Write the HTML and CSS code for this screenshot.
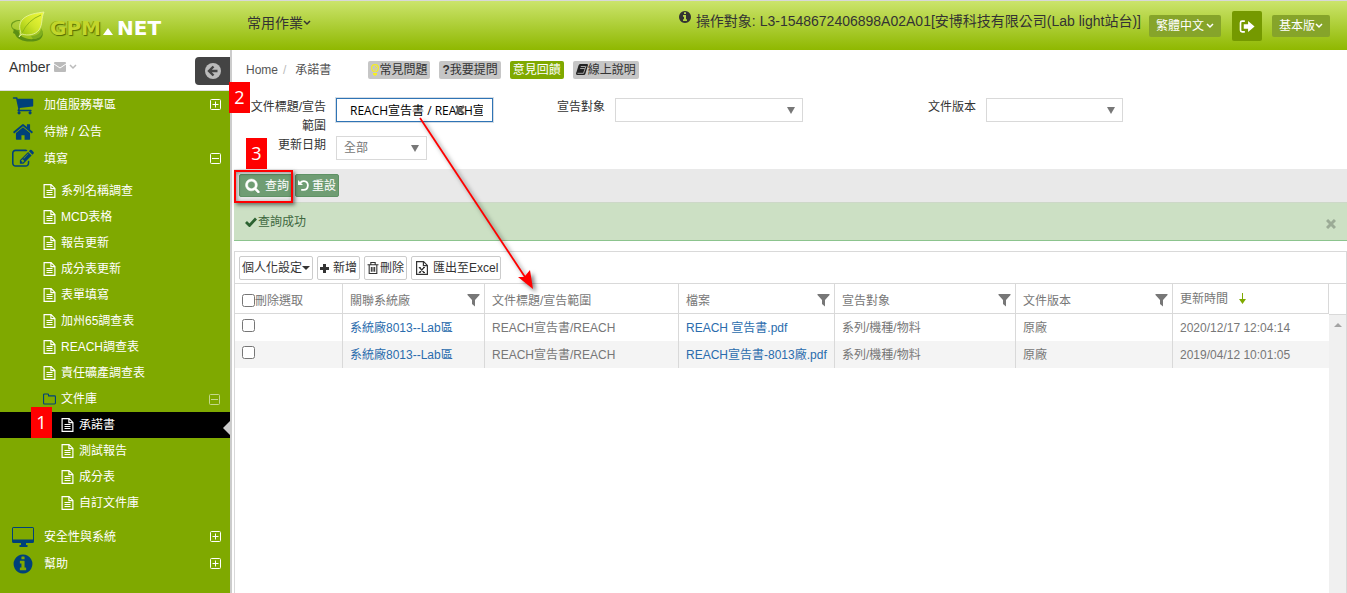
FILE: index.html
```html
<!DOCTYPE html>
<html lang="zh-Hant">
<head>
<meta charset="utf-8">
<title>GPM.NET 承諾書</title>
<link rel="stylesheet" href="styles.css">
</head>
<body>
<svg class="defs" aria-hidden="true">
  <symbol id="cart" viewBox="0 0 1792 1792"><path d="M704 1536q0 52-38 90t-90 38-90-38-38-90 38-90 90-38 90 38 38 90zm896 0q0 52-38 90t-90 38-90-38-38-90 38-90 90-38 90 38 38 90zm128-1088v512q0 24-16.500 42.500t-40.500 21.500l-1044 122q13 60 13 70 0 16-24 64h920q26 0 45 19t19 45-19 45-45 19h-1024q-26 0-45-19t-19-45q0-11 8-31.500t16-36 21.500-40 15.500-29.500l-177-823h-204q-26 0-45-19t-19-45 19-45 45-19h256q16 0 28.500 6.500t19.500 15.500 13 24.500 8 26 5.500 29.500 4.500 26h1201q26 0 45 19t19 45z"/></symbol>
  <symbol id="home" viewBox="0 0 1792 1792"><path d="M1472 992v480q0 26-19 45t-45 19h-384v-384h-256v384h-384q-26 0-45-19t-19-45v-480q0-1 .5-3t.5-3l575-474 575 474q1 2 1 6zm223-69l-62 74q-8 9-21 11h-3q-13 0-21-7l-692-577-692 577q-12 8-24 7-13-2-21-11l-62-74q-8-10-7-23.500t11-21.500l719-599q32-26 76-26t76 26l244 204v-195q0-14 9-23t23-9h192q14 0 23 9t9 23v408l219 182q10 8 11 21.500t-7 23.500z"/></symbol>
  <symbol id="edit" viewBox="0 0 1792 1792"><path d="M888 1184l116-116-152-152-116 116v56h96v96h56zm440-720q-16-16-33 1l-350 350q-17 17-1 33t33-1l350-350q17-17 1-33zm80 594v190q0 119-84.500 203.500t-203.500 84.500h-832q-119 0-203.500-84.500t-84.500-203.500v-832q0-119 84.500-203.500t203.500-84.500h832q63 0 117 25 15 7 18 23 3 17-9 29l-49 49q-14 14-32 8-23-6-45-6h-832q-66 0-113 47t-47 113v832q0 66 47 113t113 47h832q66 0 113-47t47-113v-126q0-13 9-22l64-64q15-15 35-7t20 29zm-96-738l288 288-672 672h-288v-288zm444 132l-92 92-288-288 92-92q28-28 68-28t68 28l152 152q28 28 28 68t-28 68z"/></symbol>
  <symbol id="info" viewBox="0 0 1792 1792"><path d="M1152 1376v-160q0-14-9-23t-23-9h-96v-512q0-14-9-23t-23-9h-320q-14 0-23 9t-9 23v160q0 14 9 23t23 9h96v320h-96q-14 0-23 9t-9 23v160q0 14 9 23t23 9h448q14 0 23-9t9-23zm-128-896v-160q0-14-9-23t-23-9h-192q-14 0-23 9t-9 23v160q0 14 9 23t23 9h192q14 0 23-9t9-23zm640 416q0 209-103 385.500t-279.500 279.500-385.500 103-385.500-103-279.500-279.500-103-385.500 103-385.500 279.500-279.500 385.500-103 385.500 103 279.500 279.500 103 385.500z"/></symbol>
  <symbol id="search" viewBox="0 0 1792 1792"><path stroke="currentColor" stroke-width="60" d="M1216 832q0-185-131.500-316.500t-316.500-131.500-316.500 131.500-131.500 316.500 131.500 316.500 316.500 131.500 316.500-131.500 131.500-316.500zm512 832q0 52-38 90t-90 38q-54 0-90-38l-343-342q-179 124-399 124-143 0-273.500-55.500t-225-150-150-225-55.500-273.500 55.500-273.500 150-225 225-150 273.500-55.500 273.500 55.500 225 150 150 225 55.500 273.500q0 220-124 399l343 343q37 37 37 90z"/></symbol>
  <symbol id="monitor" viewBox="0 0 22 20"><path fill-rule="evenodd" d="M1.500 0h19A1.500 1.500 0 0 1 22 1.500v13a1.500 1.500 0 0 1-1.500 1.500H14v2h1.500v2h-8v-2H9v-2H1.500A1.500 1.500 0 0 1 0 14.500v-13A1.500 1.500 0 0 1 1.500 0zM1 1v11.500h20V1z"/></symbol>
  <symbol id="file" viewBox="0 0 12 14"><path fill="none" stroke="currentColor" stroke-width="1.200" d="M.6.600h7L11.400 4.400v9H.6zM7.400.600v4h4M3 6.500h6M3 8.500h6M3 10.500h6"/></symbol>
  <symbol id="folder" viewBox="0 0 14 12"><path fill="none" stroke="currentColor" stroke-width="1.200" d="M.6 1.600q0-1 1-1H5q1 0 1 1v1h6.400q1 0 1 1v6.800q0 1-1 1H1.600q-1 0-1-1z"/></symbol>
  <symbol id="plus-box" viewBox="0 0 11 11"><path fill="none" stroke="currentColor" d="M1.500.500h8q1 0 1 1v8q0 1-1 1h-8q-1 0-1-1v-8q0-1 1-1zM2.500 5.500h6M5.500 2.500v6"/></symbol>
  <symbol id="minus-box" viewBox="0 0 11 11"><path fill="none" stroke="currentColor" d="M1.500.500h8q1 0 1 1v8q0 1-1 1h-8q-1 0-1-1v-8q0-1 1-1zM2 5.500h7"/></symbol>
  <symbol id="chevron" viewBox="0 0 8 6"><path fill="none" stroke="currentColor" stroke-width="1.500" d="M1 1l3 3 3-3"/></symbol>
  <symbol id="filter" viewBox="0 0 12 13"><path d="M0 0h12v1L7.500 6v6.500L4.500 10V6L0 1z"/></symbol>
  <symbol id="caret" viewBox="0 0 8 7"><path d="M0 0h8L4 7z"/></symbol>
</svg>

<header class="topbar">
  <a class="brand" href="#" aria-label="GPM.NET">
    <svg class="brand-leaf" viewBox="0 0 35 31">
      <defs><linearGradient id="leaf" x1="0" y1="1" x2="1" y2="0"><stop offset="0" stop-color="#8dbb08"/><stop offset=".5" stop-color="#cfe52a"/><stop offset="1" stop-color="#f2fb3c"/></linearGradient></defs>
      <path fill="#6f9e1c" d="M9 10C5 10 1 12 1 15c0 2 3 4 8 4l-1 2C2 20 0 17 0 14c0-3 4-5 9-5z"/>
      <path fill="#5c8f14" d="M3 18l5 3c0 4 7 8 15 7 5-1 8-4 8-8 2 4 0 9-6 10-10 2-19-1-21-7l-2-1z"/>
      <path fill="#7fae1e" d="M20 25c6 0 10-3 10-8l2 4c-1 5-5 7-10 7z"/>
      <path fill="url(#leaf)" stroke="#eaf6a4" stroke-width=".8" d="M33 1C26 2 17 3 12 8c-4 4-4 9-2 14l-2 4 3-3c6 2 13 1 17-4 4-6 2-12 5-18z"/>
      <path fill="none" stroke="#8fb51a" d="M30 4Q17 9 11 22"/>
    </svg>
    <span class="brand-gpm">GPM</span>
    <svg class="brand-tri" viewBox="0 0 10 7"><path fill="#fff" d="M5 0l5 7H0z"/></svg>
    <span class="brand-net">NET</span>
  </a>
  <button class="top-menu">常用作業<svg class="chev"><use href="#chevron"/></svg></button>
  <p class="target"><svg class="target-icon"><use href="#info"/></svg>操作對象: L3-1548672406898A02A01[安博科技有限公司(Lab light站台)]</p>
  <button class="top-btn">繁體中文<svg class="chev"><use href="#chevron"/></svg></button>
  <button class="logout" aria-label="登出"><svg viewBox="0 0 14 12"><path fill="none" stroke="#fff" stroke-width="1.500" d="M5 1H2.500Q1 1 1 2.500v7Q1 11 2.500 11H5"/><path fill="#fff" d="M4 4h4V1l6 5-6 5V8H4z"/></svg></button>
  <button class="top-btn">基本版<svg class="chev"><use href="#chevron"/></svg></button>
</header>

<div class="page">
  <aside class="side">
    <div class="user">
      <span>Amber</span>
      <svg class="mail" viewBox="0 0 12 10"><path fill="#bbb" d="M1 0h10q1 0 1 1v8q0 1-1 1H1q-1 0-1-1V1q0-1 1-1z"/><path fill="none" stroke="#fff" d="M0 2l6 4 6-4"/></svg>
      <svg class="chev pale"><use href="#chevron"/></svg>
      <button class="collapse" aria-label="收合選單"><svg viewBox="0 0 16 16"><circle cx="8" cy="8" r="8" fill="#bbb"/><path fill="none" stroke="#444" stroke-width="2.400" d="M8.500 3.500L4 8l4.500 4.500M4 8h8.500"/></svg></button>
    </div>
    <nav class="menu">
      <a class="item" href="#"><svg class="big"><use href="#cart"/></svg>加值服務專區<svg class="toggle"><use href="#plus-box"/></svg></a>
      <a class="item" href="#"><svg class="big"><use href="#home"/></svg>待辦 / 公告</a>
      <a class="item" href="#"><svg class="big"><use href="#edit"/></svg>填寫<svg class="toggle"><use href="#minus-box"/></svg></a>
      <div class="sub">
        <a class="leaf" href="#"><svg class="doc"><use href="#file"/></svg>系列名稱調查</a>
        <a class="leaf" href="#"><svg class="doc"><use href="#file"/></svg>MCD表格</a>
        <a class="leaf" href="#"><svg class="doc"><use href="#file"/></svg>報告更新</a>
        <a class="leaf" href="#"><svg class="doc"><use href="#file"/></svg>成分表更新</a>
        <a class="leaf" href="#"><svg class="doc"><use href="#file"/></svg>表單填寫</a>
        <a class="leaf" href="#"><svg class="doc"><use href="#file"/></svg>加州65調查表</a>
        <a class="leaf" href="#"><svg class="doc"><use href="#file"/></svg>REACH調查表</a>
        <a class="leaf" href="#"><svg class="doc"><use href="#file"/></svg>責任礦產調查表</a>
        <a class="leaf" href="#"><svg class="doc navy"><use href="#folder"/></svg>文件庫<svg class="toggle dim"><use href="#minus-box"/></svg></a>
        <a class="leaf deep active" href="#"><svg class="doc"><use href="#file"/></svg>承諾書<span class="mark mark-1">1</span></a>
        <a class="leaf deep" href="#"><svg class="doc"><use href="#file"/></svg>測試報告</a>
        <a class="leaf deep" href="#"><svg class="doc"><use href="#file"/></svg>成分表</a>
        <a class="leaf deep" href="#"><svg class="doc"><use href="#file"/></svg>自訂文件庫</a>
      </div>
      <a class="item" href="#"><svg class="big screen"><use href="#monitor"/></svg>安全性與系統<svg class="toggle"><use href="#plus-box"/></svg></a>
      <a class="item" href="#"><svg class="big"><use href="#info"/></svg>幫助<svg class="toggle"><use href="#plus-box"/></svg></a>
    </nav>
  </aside>

  <main class="main">
    <div class="crumbs">
      <a href="#">Home</a><span class="slash">/</span><span>承諾書</span>
      <div class="help">
        <button class="tag"><svg class="bulb" viewBox="0 0 8 12"><path fill="#f7ef1e" d="M4 0a4 4 0 0 1 4 4q0 2-2 4H2Q0 6 0 4a4 4 0 0 1 4-4zM2 9h4v1.500L4 12l-2-1.500z"/><path fill="#c6c6c6" d="M4 1.200a2.800 2.800 0 0 1 2.800 2.800q0 1.500-1.600 3.200H2.800Q1.200 5.500 1.200 4A2.800 2.800 0 0 1 4 1.200z"/><path fill="none" stroke="#f7ef1e" d="M4 2.500q1.500 0 1.500 1.500M4 4.500V7"/></svg>常見問題</button>
        <button class="tag"><b>?</b>我要提問</button>
        <button class="tag green">意見回饋</button>
        <button class="tag"><svg class="book" viewBox="0 0 12 11"><path fill="#222" d="M4 0h7q1 0 1 1L9.500 9.500q-.3 1.500-2 1.500H1.500Q0 11 0 9.500q0-.8.500-1.500L2.500 1.500Q3 0 4 0z"/><path fill="none" stroke="#c6c6c6" stroke-width=".8" d="M4.800 2.500h4.500M4.200 4.500h4.500M1.500 9.300h6L10 2"/></svg>線上說明</button>
      </div>
    </div>

    <form class="filters">
      <label for="title">文件標題/宣告範圍</label>
      <div class="control"><div class="text-wrap"><input class="text" id="title" type="text" value="REACH宣告書 / REACH宣告書"><svg class="clear" viewBox="0 0 10 10"><path stroke="#666" stroke-width="2.500" d="M1 1l8 8M9 1L1 9"/></svg></div></div>
      <label for="target">宣告對象</label>
      <div class="control"><div class="select-wrap wide"><select id="target"><option></option></select><svg><use href="#caret"/></svg></div></div>
      <label for="version">文件版本</label>
      <div class="control"><div class="select-wrap medium"><select id="version"><option></option></select><svg><use href="#caret"/></svg></div></div>
      <label for="date">更新日期</label>
      <div class="control"><div class="select-wrap small"><select id="date"><option>全部</option></select><svg><use href="#caret"/></svg></div></div>
    </form>

    <div class="actions">
      <button class="act"><svg class="search"><use href="#search"/></svg>查詢</button>
      <button class="act reset"><svg class="undo" viewBox="0 0 12 12"><path fill="none" stroke="#fff" stroke-width="2" d="M2 3.500Q4 1 6.500 1.200 10.800 1.600 10.800 6 10.500 10.800 6 10.800H3.500"/><path fill="#fff" d="M0 0l5.500 5.500H0z"/></svg>重設</button>
    </div>

    <div class="alert" role="status">
      <svg class="check" viewBox="0 0 12 10"><path fill="none" stroke="#2c6231" stroke-width="2.800" d="M1 5l3.500 3.500L11 1.500"/></svg>
      <span>查詢成功</span>
      <button class="close" aria-label="關閉"><svg viewBox="0 0 10 10"><path stroke="#9bab96" stroke-width="3" d="M1 1l8 8M9 1L1 9"/></svg></button>
    </div>

    <section class="grid">
      <div class="tools">
        <button class="tool">個人化設定<svg class="drop" viewBox="0 0 8 4"><path d="M0 0h8L4 4z"/></svg></button>
        <button class="tool"><svg class="plus" viewBox="0 0 9 9"><path d="M3 0h3v3h3v3H6v3H3V6H0V3h3z"/></svg>新增</button>
        <button class="tool"><svg class="trash" viewBox="0 0 10 11"><path fill="none" stroke="#333" d="M0 2.500h10M3 2V.500h4V2M1.500 3v7.500h7V3M3.500 4.500V9M5 4.500V9M6.500 4.500V9"/></svg>刪除</button>
        <button class="tool"><svg class="xls" viewBox="0 0 12 14"><path fill="none" stroke="#333" stroke-width="1.200" d="M.6.600h7L11.400 4.400v9H.6zM7.400.600v4h4"/><path fill="none" stroke="#333" stroke-width="1.200" d="M3.500 6.500l4.500 5M8 6.500l-4.500 5M2.800 6.500h2M7 6.500h2M2.800 11.500h2M7 11.500h2"/></svg>匯出至Excel</button>
      </div>
      <div class="table-area">
        <table>
          <colgroup><col class="c-pick"><col class="c-plant"><col class="c-title"><col class="c-file"><col class="c-target"><col class="c-version"><col class="c-time"></colgroup>
          <thead>
            <tr>
              <th><label class="pick-all"><input type="checkbox">刪除選取</label></th>
              <th><div class="th">關聯系統廠<svg class="filter"><use href="#filter"/></svg></div></th>
              <th><div class="th">文件標題/宣告範圍</div></th>
              <th><div class="th">檔案<svg class="filter"><use href="#filter"/></svg></div></th>
              <th><div class="th">宣告對象<svg class="filter"><use href="#filter"/></svg></div></th>
              <th><div class="th">文件版本<svg class="filter"><use href="#filter"/></svg></div></th>
              <th><div class="th sorted">更新時間<svg class="sort" viewBox="0 0 7 11"><path fill="#7fa900" d="M3 0h1v6h3l-3.500 5L0 6h3z"/></svg></div></th>
            </tr>
          </thead>
          <tbody>
            <tr><td><input type="checkbox" aria-label="選取第 1 列"></td><td><a href="#">系統廠8013--Lab區</a></td><td>REACH宣告書/REACH</td><td><a href="#">REACH 宣告書.pdf</a></td><td>系列/機種/物料</td><td>原廠</td><td>2020/12/17 12:04:14</td></tr>
            <tr><td><input type="checkbox" aria-label="選取第 2 列"></td><td><a href="#">系統廠8013--Lab區</a></td><td>REACH宣告書/REACH</td><td><a href="#">REACH宣告書-8013廠.pdf</a></td><td>系列/機種/物料</td><td>原廠</td><td>2019/04/12 10:01:05</td></tr>
          </tbody>
        </table>
        <div class="scroll"><svg viewBox="0 0 8 4"><path fill="#a3a3a3" d="M0 4l4-4 4 4z"/></svg></div>
      </div>
    </section>

    <span class="mark mark-2">2</span>
    <span class="mark mark-3">3</span>
    <span class="frame"></span>
    <svg class="arrow" viewBox="0 0 130 180"><path stroke="#f00" stroke-width="1.800" d="M6 1l105 159"/><path fill="#f00" d="M119 172l-15-12 6 0 1-1 5-6z"/></svg>
  </main>
</div>
</body>
</html>
```

FILE: styles.css
```css
* { box-sizing: border-box; }

body {
  margin: 0;
  min-height: 100vh;
  display: flex;
  flex-direction: column;
  background: #fff;
  color: #333;
  font: 12px/18px "Liberation Sans", "Noto Sans CJK TC", sans-serif;
}

button, input, select { font: inherit; color: inherit; margin: 0; }
button { border: 0; background: none; padding: 0; white-space: nowrap; }
a { color: inherit; text-decoration: none; }
svg { flex: none; fill: currentColor; }
.defs { position: absolute; width: 0; height: 0; }
.chev { width: 8px; height: 6px; }

/* Top bar */
.topbar {
  display: flex;
  align-items: flex-start;
  height: 50px;
  padding: 0 17px 0 11px;
  border-top: 1px solid #d8d8d8;
  background: linear-gradient(#cbe46c, #8fb800);
}
.brand { display: flex; align-items: flex-start; width: 236px; padding-top: 10px; }
.brand-leaf { width: 35px; height: 31px; margin-right: 4px; }
.brand-gpm, .brand-net { font: bold 20px/34px "DejaVu Sans", sans-serif; }
.brand-gpm { color: #c3d62b; text-shadow: 1px 1px 1px #526b00, -1px 0 0 #8ca40c; }
.brand-tri { width: 10px; height: 7px; margin: 17px 4px 0 2px; }
.brand-net { color: #fff; }
.top-menu { display: flex; align-items: center; padding-top: 11px; font-size: 14px; line-height: 22px; color: #333; }
.target { display: flex; margin: 0 8px 0 auto; padding-top: 9px; font-size: 14px; line-height: 22px; white-space: nowrap; }
.target-icon { width: 14px; height: 14px; margin-right: 4px; }
.top-btn {
  display: flex;
  align-items: center;
  gap: 2px;
  height: 22px;
  margin-top: 14px;
  padding: 0 7px;
  border-radius: 2px;
  background: #86a42a;
  color: #fff;
}
.top-btn:last-child { gap: 0; }
.logout {
  display: flex;
  align-items: center;
  justify-content: center;
  width: 30px;
  height: 30px;
  margin: 10px 10px 0 11px;
  border-radius: 2px;
  background: #759900;
}
.logout svg { width: 16px; height: 13px; }

/* Sidebar */
.page { flex: 1; display: flex; align-items: stretch; }
.side { flex: none; display: flex; flex-direction: column; width: 232px; border-right: 2px solid #ccc; }
.user { display: flex; align-items: flex-start; height: 41px; padding: 7px 0 0 9px; border-bottom: 1px solid #ddd; font-size: 14px; line-height: 20px; }
.mail { width: 12px; height: 10px; margin: 5px 3px 0 4px; }
.pale { color: #bbb; margin-top: 7px; }
.collapse { display: flex; align-items: center; height: 28px; width: 35px; margin-left: auto; padding-left: 10px; border-radius: 4px 0 0 4px; background: #444; }
.collapse svg { width: 16px; height: 16px; }
.menu { flex: 1; background: #7fa900; color: #fff; }
.item { display: flex; align-items: center; height: 27px; padding: 0 9px 0 12px; }
.big { width: 22px; height: 22px; margin-right: 10px; color: #00417a; }
.screen { height: 20px; }
.toggle { width: 11px; height: 11px; margin-left: auto; }
.dim { color: #c4d98c; }
.sub { padding: 6px 0 7px; }
.leaf { position: relative; display: flex; align-items: center; height: 26px; padding: 0 10px 0 43px; }
.doc { width: 13px; height: 14px; margin-right: 5px; }
.navy { color: #00417a; }
.deep { padding-left: 61px; }
.active { background: #000; }
.active::after {
  content: "";
  position: absolute;
  right: 0;
  top: 9px;
  border: solid transparent;
  border-width: 7px 7px 7px 0;
  border-right-color: #ccc;
}

/* Breadcrumb */
.main { position: relative; flex: 1; min-width: 0; display: flex; flex-direction: column; padding-left: 2px; }
.crumbs { display: flex; align-items: center; height: 39px; padding-left: 12px; color: #555; }
.slash { margin: 0 9px 0 5px; color: #bbb; }
.help { display: flex; gap: 9px; margin-left: 37px; }
.tag { display: flex; align-items: center; height: 18px; padding: 0 3px; border-radius: 2px; background: #c6c6c6; color: #333; }
.green { background: #7fa900; color: #fff; }
.bulb { width: 8px; height: 12px; }
.book { width: 12px; height: 11px; }

/* Filters */
.filters {
  display: grid;
  grid-template-columns: 92px 169fr 90px 261fr 90px 361fr;
  column-gap: 10px;
  align-items: start;
  padding: 9px 0;
}
.filters label { padding-left: 12px; text-align: right; line-height: 19px; }
.control { min-width: 0; }
.text-wrap { position: relative; width: 157px; }
.text { display: block; width: 100%; height: 24px; padding: 0 9px 0 13px; border: 1px solid #2f74b5; outline: 1px solid #d5dde5; color: #000; font-family: "Open Sans", "Noto Sans CJK TC", sans-serif; }
.clear { position: absolute; right: 28px; top: 7px; width: 10px; height: 10px; }
.select-wrap { position: relative; }
.select-wrap select { display: block; appearance: none; width: 100%; height: 24px; padding: 0 7px; border: 1px solid #d9d9d9; border-radius: 0; background: #fff; color: #777; }
.select-wrap svg { position: absolute; right: 8px; top: 9px; width: 8px; height: 7px; color: #777; pointer-events: none; }
.wide { width: 188px; }
.medium { width: 137px; }
.small { width: 91px; }

/* Actions and message */
.actions { display: flex; gap: 2px; padding: 5px 5px; background: #e9e9e9; }
.act { display: flex; align-items: center; gap: 5px; height: 23px; padding: 0 3px 0 5px; border: 1px solid #5f9265; border-radius: 2px; background: #6f9d73; color: #fff; }
.act.reset { gap: 3px; padding: 0 2px; }
.search { width: 15px; height: 15px; }
.undo { width: 11px; height: 11px; }
.alert { display: flex; align-items: center; gap: 1px; height: 39px; padding: 0 11px; border-top: 1px solid #cdd8c8; border-bottom: 1px solid #8cc48e; background: #cce0c4; color: #3c673e; }
.check { width: 12px; height: 10px; }
.close { margin: 4px 0 0 auto; }
.close svg { display: block; width: 10px; height: 10px; }

/* Data grid */
.grid { flex: 1; display: flex; flex-direction: column; margin-top: 10px; border: 1px solid #d9d9d9; border-bottom: 0; color: #777; }
.tools { display: flex; gap: 4px; padding: 4px 4px 3px; }
.tool { display: flex; align-items: center; height: 24px; padding: 0 2px; border: 1px solid #ccc; border-radius: 2px; background: #fff; color: #333; }
.drop { width: 8px; height: 4px; }
.plus { width: 9px; height: 9px; margin-right: 4px; }
.trash { width: 12px; height: 12px; margin-right: 1px; }
.xls { width: 12px; height: 14px; margin: 0 5px 0 2px; }
.table-area { flex: 1; display: flex; align-items: stretch; border-top: 1px solid #d9d9d9; }
table { flex: 1; align-self: flex-start; table-layout: fixed; width: 0; border-collapse: separate; border-spacing: 0; }
.c-pick { width: 108px; }
.c-plant { width: 142px; }
.c-title { width: 194px; }
.c-file { width: 156px; }
.c-target { width: 181px; }
.c-version { width: 157px; }
.c-time { width: auto; }
th, td { padding: 0 5px 0 7px; border-right: 1px solid #d9d9d9; text-align: left; font-weight: normal; white-space: nowrap; }
th { height: 30px; padding: 4px 4px 0 7px; border-bottom: 1px solid #d9d9d9; }
td { height: 27px; }
td:last-child { border-right: 0; }
tbody tr:nth-child(even) td { background: #f4f4f4; }
td a { color: #2a6cad; }
td input, th input { display: block; width: 13px; height: 13px; }
td input { margin-bottom: 5px; }
.pick-all { display: flex; align-items: center; }
.th { display: flex; align-items: center; }
.filter { width: 13px; height: 13px; margin-left: auto; }
.sorted { padding-bottom: 4px; }
.sort { width: 7px; height: 11px; margin-left: 11px; }
.scroll { width: 17px; background: #f0f0f0; text-align: center; }
.scroll::before { content: ""; display: block; height: 30px; border-bottom: 1px solid #d9d9d9; background: #fff; }
.scroll svg { display: block; width: 8px; height: 4px; margin: 8px auto 0; }

/* Step markers laid over the page */
.mark { position: absolute; width: 21px; height: 31px; background: #f00; color: #fff; text-align: center; font: 18px/31px "Open Sans", sans-serif; }
.mark-1 { left: 31px; bottom: 0; }
.mark-2 { left: -3px; top: 32px; }
.mark-3 { left: 14px; top: 88px; }
.frame { position: absolute; left: 2px; top: 120px; width: 59px; height: 33px; border: 2px solid #f00; box-shadow: 2px 2px 4px rgba(0, 0, 0, .5), inset 1px 1px 4px rgba(0, 0, 0, .4); pointer-events: none; }
.arrow { position: absolute; left: 182px; top: 67px; width: 130px; height: 180px; filter: drop-shadow(3px 3px 2px rgba(0, 0, 0, .5)); pointer-events: none; }
```
